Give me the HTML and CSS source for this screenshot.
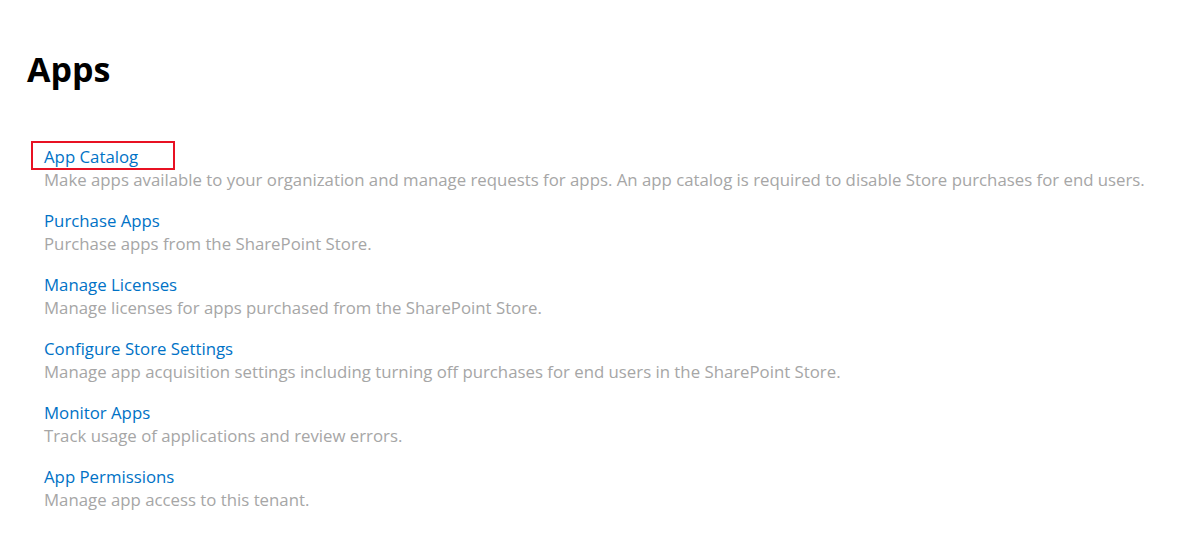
FILE: index.html
```html
<!DOCTYPE html>
<html>
<head>
<meta charset="utf-8">
<link rel="stylesheet" href="styles.css">
</head>
<body>
<main class="page">
  <h1 class="title">Apps</h1>
  <ul class="list">
    <li class="item">
      <span class="mark"></span>
      <a class="link" href="#">App Catalog</a>
      <p class="desc">Make apps available to your organization and manage requests for apps. An app catalog is required to disable Store purchases for end users.</p>
    </li>
    <li class="item">
      <a class="link" href="#">Purchase Apps</a>
      <p class="desc">Purchase apps from the SharePoint Store.</p>
    </li>
    <li class="item">
      <a class="link" href="#">Manage Licenses</a>
      <p class="desc">Manage licenses for apps purchased from the SharePoint Store.</p>
    </li>
    <li class="item">
      <a class="link" href="#">Configure Store Settings</a>
      <p class="desc">Manage app acquisition settings including turning off purchases for end users in the SharePoint Store.</p>
    </li>
    <li class="item">
      <a class="link" href="#">Monitor Apps</a>
      <p class="desc">Track usage of applications and review errors.</p>
    </li>
    <li class="item">
      <a class="link" href="#">App Permissions</a>
      <p class="desc">Manage app access to this tenant.</p>
    </li>
  </ul>
</main>
</body>
</html>
```
FILE: styles.css
```css
html, body {
  margin: 0;
  padding: 0;
  background: #ffffff;
}
.page {
  font-family: "Open Sans", "Noto Sans", sans-serif;
  padding: 46px 0 0 27px;
}
.title {
  margin: 0;
  font-size: 34px;
  font-weight: 700;
  line-height: 46px;
  color: #000000;
}
.list {
  list-style: none;
  margin: 0;
  padding: 0 0 0 17px;
  display: flex;
  flex-direction: column;
  gap: 18px;
  margin-top: 53px;
}
.item {
  position: relative;
  display: flex;
  flex-direction: column;
  align-items: flex-start;
}
.link {
  font-size: 16.8px;
  line-height: 23px;
  color: #0072c6;
  text-decoration: none;
}
.desc {
  margin: 0;
  font-size: 16.8px;
  line-height: 23px;
  color: #a6a6a6;
  white-space: nowrap;
}
.mark {
  position: absolute;
  left: -13px;
  top: -4px;
  width: 140px;
  height: 25px;
  border: 2px solid #e81123;
}
```
